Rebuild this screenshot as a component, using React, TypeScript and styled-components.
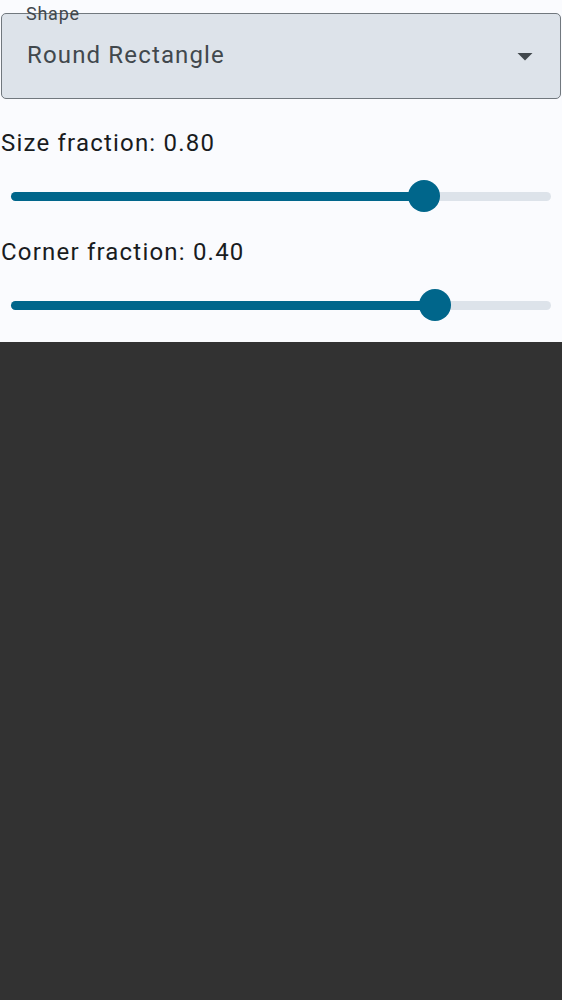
import React from "react";
import styled, { createGlobalStyle } from "styled-components";

const Global = createGlobalStyle`
  html, body { margin: 0; padding: 0; background: #323232; }
  body { font-family: Roboto, "Liberation Sans", sans-serif; }
  * { box-sizing: border-box; }
`;

const Panel = styled.div`
  background: #fafbfe;
  padding: 13px 1px 21px 1px;
  display: flex;
  flex-direction: column;
`;

const Field = styled.div`
  position: relative;
  height: 86px;
  border: 1px solid #71787e;
  border-radius: 5px;
  background: #dde3ea;
  display: flex;
  align-items: flex-start;
  justify-content: space-between;
  padding: 25px 17px 0 25px;
`;

const FieldLabel = styled.span`
  position: absolute;
  left: 24px;
  top: -12px;
  font-size: 18px;
  line-height: 24px;
  letter-spacing: 0.75px;
  color: #41484d;
`;

const FieldValue = styled.span`
  font-size: 24px;
  line-height: 32px;
  letter-spacing: 1.15px;
  color: #41484d;
`;

const Arrow = styled.svg`
  width: 36px;
  height: 36px;
  margin-top: -1px;
  fill: #41484d;
`;

const Label = styled.div<{ $top: number }>`
  margin-top: ${(p) => p.$top}px;
  font-size: 24px;
  line-height: 24px;
  letter-spacing: 1.2px;
  color: #191c1e;
`;

const SliderBox = styled.div<{ $top: number }>`
  position: relative;
  margin: ${(p) => p.$top}px 10px 0 10px;
  height: 32px;
  display: flex;
  align-items: center;
`;

const Track = styled.div`
  position: relative;
  width: 100%;
  height: 9px;
  border-radius: 5px;
  background: #dde3ea;
`;

const ActiveTrack = styled.div`
  position: absolute;
  left: 0;
  top: 0;
  bottom: 0;
  border-radius: 5px;
  background: #00668b;
`;

const Thumb = styled.div`
  position: absolute;
  top: 50%;
  width: 32px;
  height: 32px;
  margin: -16px 0 0 -16px;
  border-radius: 50%;
  background: #00668b;
`;

function Slider({ pos, top }: { pos: number; top: number }) {
  const pct = `${pos * 100}%`;
  return (
    <SliderBox $top={top}>
      <Track>
        <ActiveTrack style={{ width: pct }} />
        <Thumb style={{ left: pct }} />
      </Track>
    </SliderBox>
  );
}

export default function App() {
  return (
    <>
      <Global />
      <Panel>
        <Field>
          <FieldLabel>Shape</FieldLabel>
          <FieldValue>Round Rectangle</FieldValue>
          <Arrow viewBox="0 0 24 24">
            <path d="M7 10l5 5 5-5z" />
          </Arrow>
        </Field>
        <Label $top={32}>Size fraction: 0.80</Label>
        <Slider pos={0.765} top={25} />
        <Label $top={28}>Corner fraction: 0.40</Label>
        <Slider pos={0.786} top={25} />
      </Panel>
    </>
  );
}
